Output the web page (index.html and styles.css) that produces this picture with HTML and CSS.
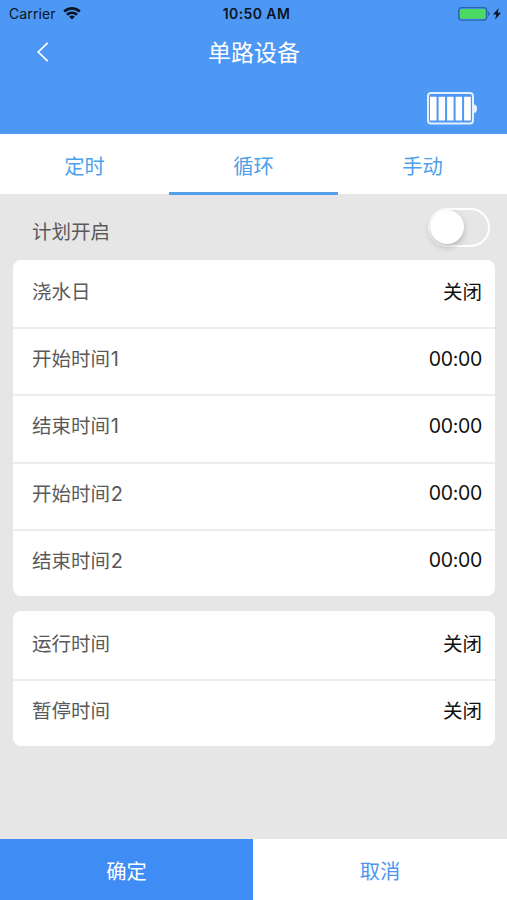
FILE: index.html
```html
<!DOCTYPE html>
<html lang="zh-CN">
<head>
<meta charset="utf-8">
<title>单路设备</title>
<link rel="stylesheet" href="styles.css">
</head>
<body>
<div class="screen">
  <header class="header">
    <div class="status">
      <div class="status-left">
        <span class="carrier">Carrier</span>
        <svg class="wifi" width="18" height="13" viewBox="0 0 18 13">
          <g fill="none" stroke="#0b1420" stroke-width="2.6">
            <path d="M1.2 4.5A11.2 11.2 0 0 1 16.8 4.5"/>
            <path d="M4 7.8A7.2 7.2 0 0 1 14 7.8"/>
          </g>
          <path d="M6.2 9.8A4 4 0 0 1 11.8 9.8L9 12.6Z" fill="#0b1420"/>
        </svg>
      </div>
      <span class="clock">10:50 AM</span>
      <svg class="power" width="44" height="14" viewBox="0 0 44 14">
        <rect x="0.7" y="0.7" width="28" height="12.4" rx="3" fill="none" stroke="#2b62a8" stroke-width="1.3"/>
        <rect x="2" y="2" width="25.4" height="9.8" rx="1.5" fill="#4cd964"/>
        <path d="M30 4.8Q31.8 5.3 31.8 6.9T30 9Z" fill="#2b62a8"/>
        <path d="M40.8 1L35 7.6H38.4L37 12.8L43 5.8H39.6Z" fill="#0b1420"/>
      </svg>
    </div>
    <div class="nav">
      <svg class="back" width="12" height="20" viewBox="0 0 12 20"><path d="M10.7 0.8L1.2 10L10.7 19.2" fill="none" stroke="#fff" stroke-width="1.7"/></svg>
      <h1 class="title">单路设备</h1>
    </div>
    <svg class="battery" width="51" height="33" viewBox="0 0 51 33">
      <rect x="1" y="1" width="45" height="30.5" rx="3" fill="none" stroke="#e3f0ff" stroke-width="2"/>
      <path d="M46.8 12.2Q50 12.6 50 16.7T46.8 21.2Z" fill="#e3f0ff"/>
      <path d="M3 4.8H9.6V28.6H3ZM11.6 4.8H18.1V28.6H11.6ZM20.1 4.8H26.6V28.6H20.1ZM28.6 4.8H35.1V28.6H28.6ZM37.1 4.8H43.8V28.6H37.1Z" fill="#fff"/>
    </svg>
  </header>
  <nav class="tabs">
    <div class="tab">定时</div>
    <div class="tab active">循环</div>
    <div class="tab">手动</div>
  </nav>
  <main class="content">
    <div class="plan"><span>计划开启</span><div class="switch"><div class="knob"></div></div></div>
    <section class="card">
      <div class="row"><span>浇水日</span><span class="value">关闭</span></div>
      <div class="row"><span>开始时间<span class="digit">1</span></span><span class="value time">00:00</span></div>
      <div class="row"><span>结束时间<span class="digit">1</span></span><span class="value time">00:00</span></div>
      <div class="row"><span>开始时间<span class="digit">2</span></span><span class="value time">00:00</span></div>
      <div class="row"><span>结束时间<span class="digit">2</span></span><span class="value time">00:00</span></div>
    </section>
    <section class="card">
      <div class="row"><span>运行时间</span><span class="value">关闭</span></div>
      <div class="row"><span>暂停时间</span><span class="value">关闭</span></div>
    </section>
  </main>
  <footer class="actions">
    <div class="action confirm">确定</div>
    <div class="action cancel">取消</div>
  </footer>
</div>
</body>
</html>
```
FILE: styles.css
```css
* { box-sizing: border-box; }
body {
  margin: 0;
  font-family: Inter, "Noto Sans CJK SC", sans-serif;
  font-size: 19.5px;
  color: #5a5a5a;
}
.screen {
  width: 507px;
  height: 900px;
  display: flex;
  flex-direction: column;
  background: #e6e6e6;
  overflow: hidden;
}
.header {
  height: 134px;
  display: flex;
  flex-direction: column;
  background: #4d98f4;
}
.status {
  height: 27px;
  display: grid;
  grid-template-columns: 1fr auto 1fr;
  align-items: center;
  padding: 0 5px 0 9px;
  color: #0b1420;
  font-size: 14px;
}
.status-left { display: flex; align-items: center; gap: 7px; }
.carrier { letter-spacing: 0.1px; }
.clock { font-weight: 600; letter-spacing: 0.4px; padding-left: 2px; }
.power { justify-self: end; }
.nav {
  height: 50px;
  display: grid;
  grid-template-columns: 37px 1fr 36px;
  align-items: center;
}
.back { justify-self: end; margin-right: -12px; }
.title {
  margin: 0;
  padding-top: 2px;
  text-align: center;
  font-size: 23px;
  font-weight: 400;
  line-height: 34px;
  color: #fff;
}
.battery { margin: 15px 29px 0 auto; }
.tabs {
  height: 61px;
  display: grid;
  grid-template-columns: repeat(3, 1fr);
  background: linear-gradient(#fff 60px, #e6e6e6 60px);
}
.tab {
  display: flex;
  align-items: center;
  justify-content: center;
  border-bottom: 3px solid transparent;
  padding-top: 3px;
  font-size: 20.3px;
  color: #4f9fe9;
}
.tab.active { border-bottom-color: #559fe8; }
.content { flex: 1; padding: 0 12px 0 13px; }
.plan {
  height: 65px;
  display: flex;
  align-items: flex-start;
  justify-content: space-between;
  padding: 13px 5px 0 19px;
}
.plan span { line-height: 49px; }
.switch {
  width: 62px;
  height: 39px;
  border: 2px solid #fff;
  border-radius: 20px;
}
.knob {
  width: 34px;
  height: 34px;
  border-radius: 50%;
  background: #fff;
  box-shadow: 0 3px 6px rgba(0, 0, 0, 0.22);
}
.card {
  margin-bottom: 15.5px;
  border-radius: 8px;
  background: #fff;
}
.row {
  height: 67.2px;
  display: flex;
  align-items: center;
  justify-content: space-between;
  padding: 0 13px 8px 19px;
  border-top: 2px solid #ededed;
}
.row:first-child { border-top-color: transparent; }
.digit { font-size: 20px; margin-left: 0.8px; }
.value { color: #111; }
.time { font-size: 19.5px; letter-spacing: -0.3px; padding-top: 2px; }
.actions { height: 61px; display: grid; grid-template-columns: 253px 1fr; }
.action {
  display: flex;
  align-items: center;
  justify-content: center;
  font-size: 20.3px;
}
.confirm { background: #3f8df4; color: #fff; }
.cancel { background: #fff; color: #4e95f0; }
```
